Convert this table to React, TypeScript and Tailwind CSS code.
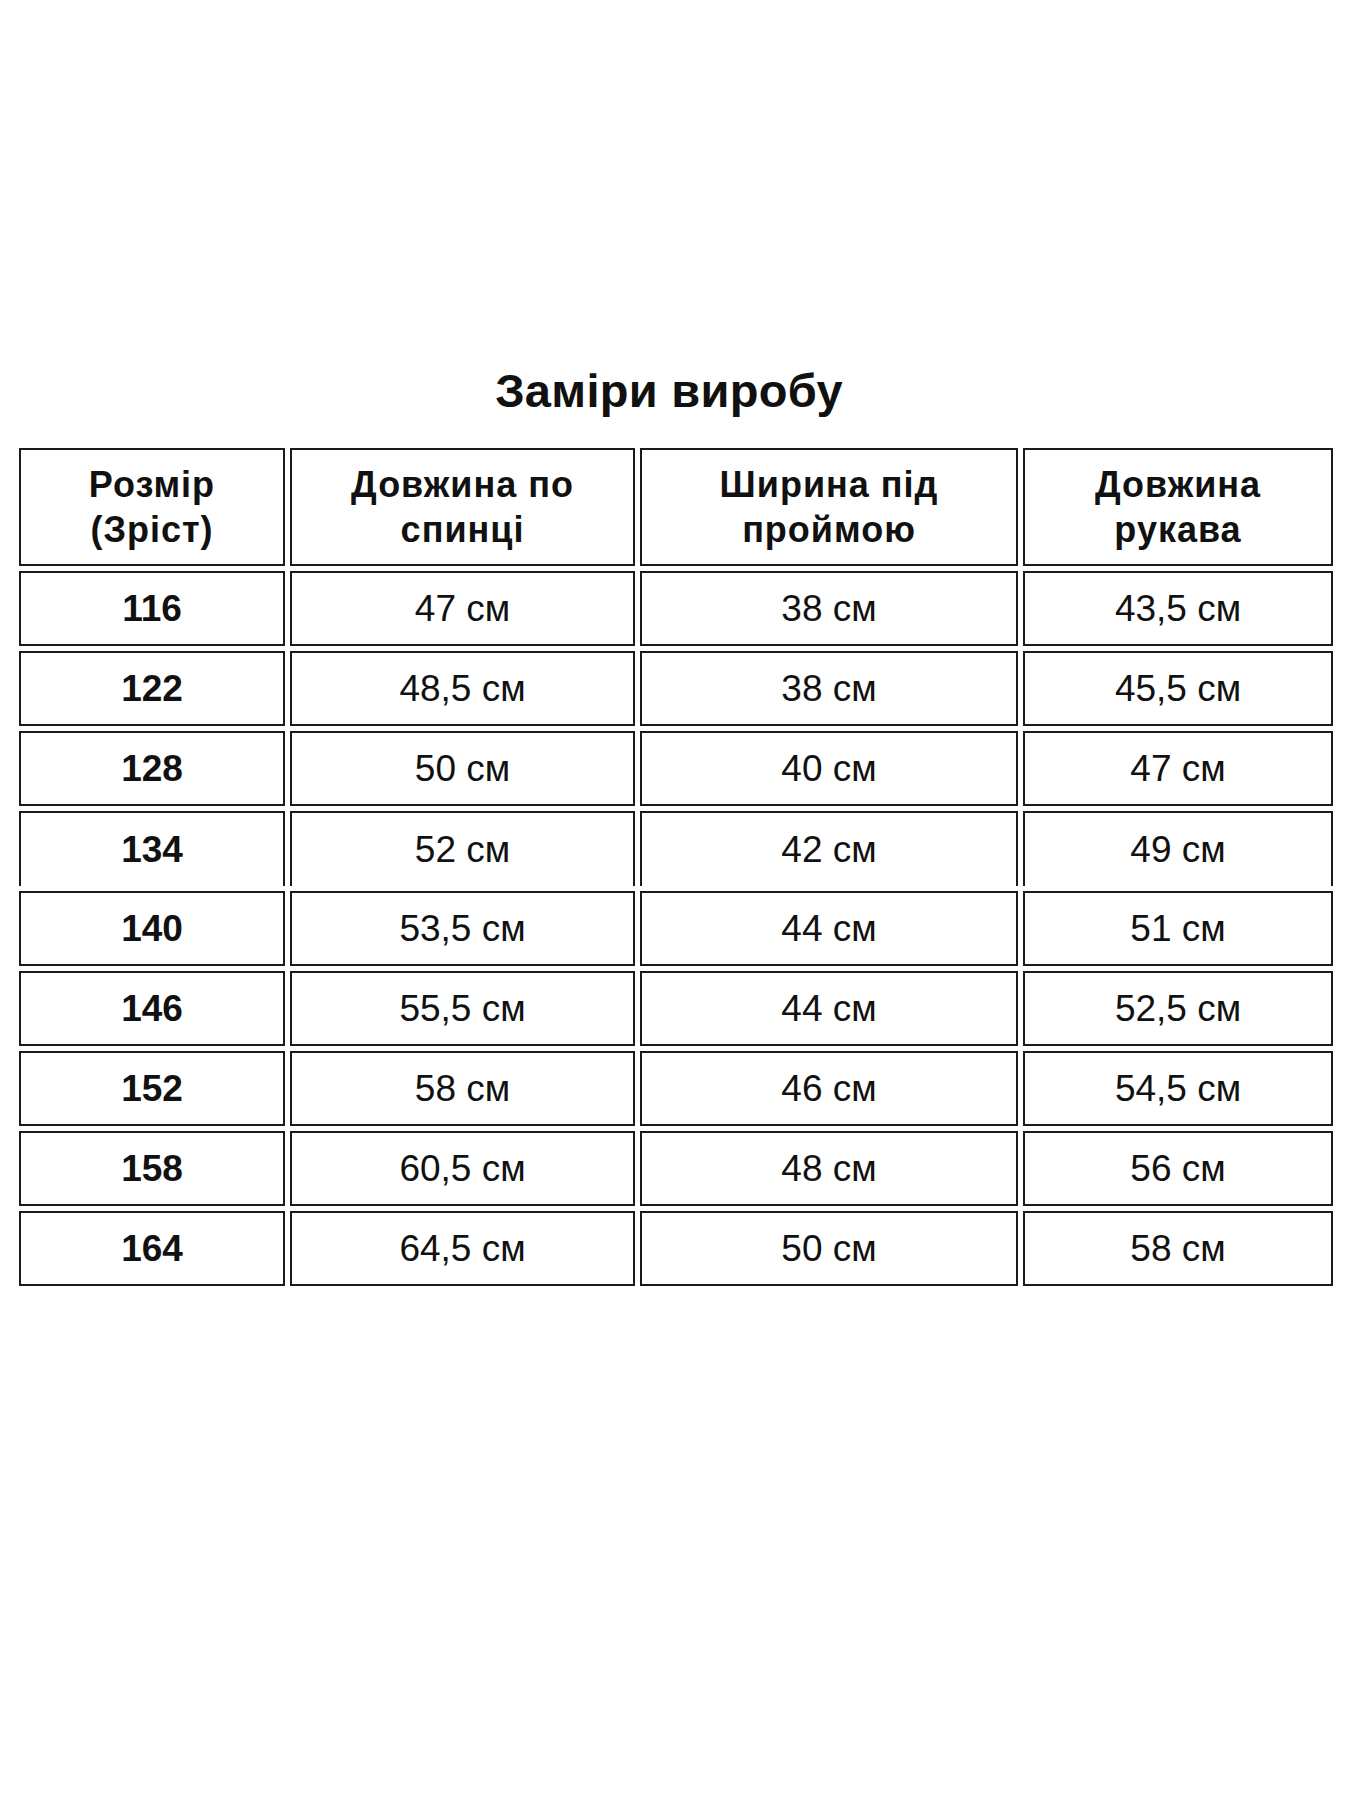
const headers = [
  ["Розмір", "(Зріст)"],
  ["Довжина по", "спинці"],
  ["Ширина під", "проймою"],
  ["Довжина", "рукава"],
];

const rows = [
  ["116", "47 см", "38 см", "43,5 см"],
  ["122", "48,5 см", "38 см", "45,5 см"],
  ["128", "50 см", "40 см", "47 см"],
  ["134", "52 см", "42 см", "49 см"],
  ["140", "53,5 см", "44 см", "51 см"],
  ["146", "55,5 см", "44 см", "52,5 см"],
  ["152", "58 см", "46 см", "54,5 см"],
  ["158", "60,5 см", "48 см", "56 см"],
  ["164", "64,5 см", "50 см", "58 см"],
];

const font = { fontFamily: '"Liberation Sans", Arial, sans-serif' };

export default function App() {
  return (
    <div className="min-h-[1800px] w-[1350px] bg-white text-[#111]" style={font}>
      <div className="pt-[363px] flex flex-col items-center">
        <h1 className="text-[47px] font-bold leading-[56px] ml-[-12px] tracking-[0.3px]">
          Заміри виробу
        </h1>
      </div>
      <div className="mt-[29px] px-[19px] grid grid-cols-[266px_345px_378px_310px] gap-x-[5px] gap-y-[5px]">
        {headers.map((h, i) => (
          <div
            key={i}
            className="h-[118px] border-2 border-[#1a1a1a] flex flex-col items-center justify-center text-[36px] font-bold leading-[45px] tracking-[1px]"
          >
            <span>{h[0]}</span>
            <span>{h[1]}</span>
          </div>
        ))}
        {rows.map((r, ri) =>
          r.map((c, ci) => (
            <div
              key={ri + "-" + ci}
              className={
                "h-[75px] border-2 border-[#1a1a1a] flex items-center justify-center text-[37px] leading-none " +
                (ci === 0 ? "font-bold " : "") +
                (ri === 3 ? "border-b-0" : "")
              }
            >
              <span>{c}</span>
            </div>
          ))
        )}
      </div>
    </div>
  );
}
